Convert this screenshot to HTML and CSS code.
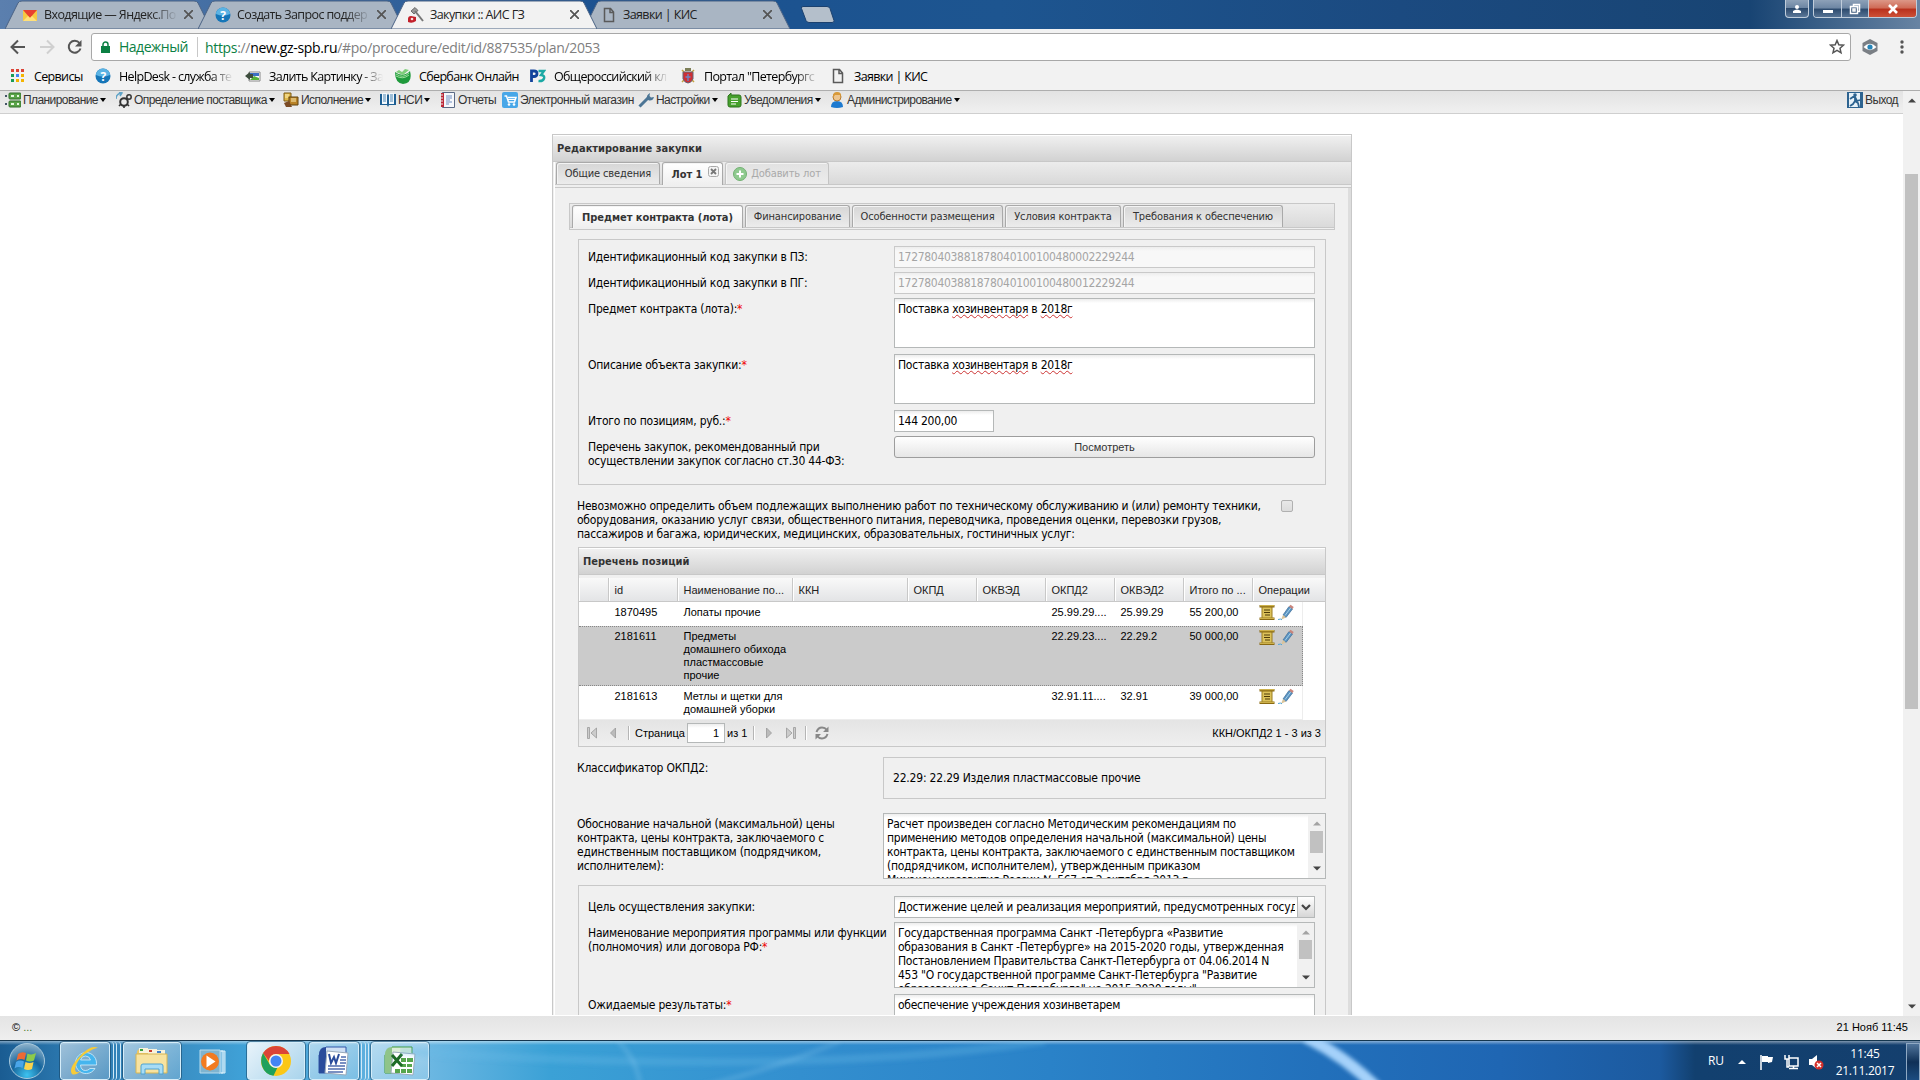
FILE: index.html
```html
<!DOCTYPE html>
<html lang="ru">
<head>
    <meta charset="UTF-8">
    <title>Закупки :: АИС ГЗ</title>
    <link rel="stylesheet" href="styles.css">
</head>
<body>

<!-- icons used more than once -->
<svg class="defs" width="0" height="0">
    <symbol id="i-doc" viewBox="0 0 12 16"><path d="M1.500 1.500h6l3 3.500v9.500h-9z M7 1.500v4h3.500" fill="none" stroke="#5a5a5a" stroke-width="1.500"/></symbol>
    <symbol id="i-help" viewBox="0 0 16 16"><circle cx="8" cy="8" r="7.500" fill="#1676b8"/><path d="M1 7a7 6.500 0 0 1 14 0q-7 3-14 0z" fill="#5bb3e4"/><text x="8" y="12.500" font-size="12" font-weight="bold" text-anchor="middle" fill="#fff">?</text></symbol>
    <symbol id="i-scroll" viewBox="0 0 16 16"><path d="M3 2h10v12H3z" fill="#dcc25a" stroke="#9a7c1e"/><path d="M.500 1.700h15M.500 14.300h15" stroke="#8a6a12" stroke-width="2.600"/><path d="M1 1.200h14M1 13.800h14" stroke="#dcc25a"/><path d="M5 5.500h6M5 8h6M6 10.500h5" stroke="#4d3b08"/></symbol>
    <symbol id="i-pencil" viewBox="0 0 16 16"><path d="M5 10.500L11 2l3.500 2.500-6.500 8.500z" fill="#5b94c2" stroke="#3b6c96" stroke-width=".7"/><path d="M7 11l6-8" stroke="#a5cfe8"/><path d="M11 2l1.500-1.800L15.700 2.500 14.500 4.500z" fill="#c9857c"/><path d="M5 10.500l3 2.500-5 2.200z" fill="#d9c39a"/><path d="M0 15q3-1 4 .3" stroke="#51a5d6" fill="none"/></symbol>
    <symbol id="i-up" viewBox="0 0 8 5"><path d="M0 4.500L4 .5l4 4z" fill="currentColor"/></symbol>
    <symbol id="i-down" viewBox="0 0 8 5"><path d="M0 .5L4 4.500l4-4z" fill="currentColor"/></symbol>
</svg>

<div class="titlebar">
    <div class="tab">
        <svg class="tab-bg" viewBox="0 0 206 29" preserveAspectRatio="none"><path d="M0 29L13 3q1-2 4-2H189q3 0 4 2L206 29z"/></svg>
        <svg class="fav" viewBox="0 0 16 16"><path d="M1 3h14v11H1z" fill="#f5c842"/><path d="M1 3l7 8 7-8z" fill="#e8402f"/><path d="M1 14l5-5 2 2 2-2 5 5z" fill="#ffe07a"/></svg>
        <span class="tab-title t1">Входящие — Яндекс.По</span><span class="tab-x"></span>
    </div>
    <div class="tab">
        <svg class="tab-bg" viewBox="0 0 206 29" preserveAspectRatio="none"><path d="M0 29L13 3q1-2 4-2H189q3 0 4 2L206 29z"/></svg>
        <svg class="fav"><use href="#i-help"/></svg>
        <span class="tab-title t2">Создать Запрос поддер</span><span class="tab-x"></span>
    </div>
    <div class="tab active">
        <svg class="tab-bg" viewBox="0 0 206 29" preserveAspectRatio="none"><path d="M0 29L13 3q1-2 4-2H189q3 0 4 2L206 29z"/></svg>
        <svg class="fav" viewBox="0 0 16 16"><path d="M3 4l4-3.500 3 3L6 7z" fill="#999" stroke="#555" stroke-width=".8"/><path d="M7 4l8 10" stroke="#777" stroke-width="2"/><path d="M0 12q0-3 3-3l5 1v4q-4 3-8 1z" fill="#c3202a"/><circle cx="4" cy="12" r="1.300" fill="#f6dede"/></svg>
        <span class="tab-title t3">Закупки :: АИС ГЗ</span><span class="tab-x"></span>
    </div>
    <div class="tab">
        <svg class="tab-bg" viewBox="0 0 206 29" preserveAspectRatio="none"><path d="M0 29L13 3q1-2 4-2H189q3 0 4 2L206 29z"/></svg>
        <svg class="fav doc"><use href="#i-doc"/></svg>
        <span class="tab-title t4">Заявки | КИС</span><span class="tab-x"></span>
    </div>
    <svg class="new-tab" width="34" height="18"><path d="M2 .5h24q2 0 3 2l4 12q.500 2-2 2H8q-2 0-3-2L.500 2.500q-.500-2 1.500-2z" fill="#b4bfcb" stroke="#1b416f"/></svg>
    <div class="win-buttons">
        <div class="wb user"><svg width="10" height="10"><circle cx="5" cy="3" r="2" fill="#fff"/><path d="M1 9V7q4-3 8 0v2z" fill="#fff"/></svg></div>
        <div class="wb-group">
            <div class="wb min"><svg width="12" height="10"><path d="M1 6h10v3H1z" fill="#fff"/></svg></div>
            <div class="wb max"><svg width="12" height="12"><path d="M4.500 3V1.500h6v7H9M1.500 3.500h7v7h-7z M4 6h2v2H4z" stroke="#fff" fill="none" stroke-width="1.500"/></svg></div>
            <div class="wb close"><svg width="12" height="10"><path d="M2 1l8 8M10 1L2 9" stroke="#fff" stroke-width="2.600"/></svg></div>
        </div>
    </div>
</div>

<div class="toolbar">
    <svg class="nav back" width="16" height="16"><path d="M15 8H2M8 1.500L1.500 8 8 14.500" stroke="#555" stroke-width="2" fill="none"/></svg>
    <svg class="nav fwd" width="16" height="16"><path d="M1 8h13M8 1.500L14.500 8 8 14.500" stroke="#d0d0d0" stroke-width="2" fill="none"/></svg>
    <svg class="nav reload" width="17" height="16"><path d="M13.500 4A6 6 0 1 0 14.500 9.500" stroke="#555" stroke-width="2" fill="none"/><path d="M15.500 1v6.500H9z" fill="#555"/></svg>
    <div class="url">
        <svg class="lock" width="9" height="12"><path d="M0 5h9v7H0z" fill="#0b8043"/><path d="M2 5V3.500a2.500 2.500 0 0 1 5 0V5" stroke="#0b8043" stroke-width="1.500" fill="none"/></svg>
        <span class="secure">Надежный</span>
        <span class="addr"><span class="g">https</span>://<span class="k">new.gz-spb.ru</span>/#po/procedure/edit/id/887535/plan/2053</span>
        <svg class="star" width="16" height="16"><path d="M8 1.500l1.800 4.300 4.700.4-3.500 3.100 1 4.500L8 11.400l-4 2.400 1-4.500L1.500 6.200l4.700-.4z" fill="none" stroke="#555" stroke-width="1.500"/></svg>
    </div>
    <svg class="ext" width="18" height="18"><path d="M9 1l7.500 4v8L9 17l-7.500-4V5z" fill="#7a7f85"/><path d="M2.500 9Q9 2.500 15.500 9 9 15.500 2.500 9z" fill="#fff"/><circle cx="9" cy="9" r="2.600" fill="#2584b8"/></svg>
    <svg class="dots" width="4" height="14"><circle cx="2" cy="2" r="1.700" fill="#555"/><circle cx="2" cy="7" r="1.700" fill="#555"/><circle cx="2" cy="12" r="1.700" fill="#555"/></svg>
</div>

<div class="bookmarks">
    <div class="bm b1"><svg viewBox="0 0 14 14"><path d="M0 0h3v3H0zM5 0h3v3H5zM10 0h3v3h-3z" fill="#dc4437"/><path d="M0 5h3v3H0z" fill="#1a9c57"/><path d="M5 5h3v3H5z" fill="#4285f4"/><path d="M10 5h3v3h-3zM5 10h3v3H5zM10 10h3v3h-3z" fill="#f4b400"/><path d="M0 10h3v3H0z" fill="#1a9c57"/></svg><span>Сервисы</span></div>
    <div class="bm b2"><svg><use href="#i-help"/></svg><span class="fade">HelpDesk - служба те</span></div>
    <div class="bm b3"><svg viewBox="0 0 16 16"><path d="M4 4h11v9H4z" fill="#fff" stroke="#888"/><path d="M5 5h9v3H5z" fill="#3c6fc4"/><path d="M5 12l4-4 5 2v2z" fill="#56b33c"/><path d="M0 8l5-4v2h3v4H5v2z" fill="#3d4d3d"/></svg><span class="fade">Залить Картинку - За</span></div>
    <div class="bm b4"><svg viewBox="0 0 16 16"><path d="M0 4q8 6 15-1 3 12-7 13Q0 15 0 4z" fill="#1f9a3c"/><path d="M1 4l3-2 3 2 3-3 4 1-6 5z" fill="#7fce7a"/><path d="M1 6q7 5 13-1M1 8q7 4 13-1" stroke="#baf0b0" fill="none" stroke-width=".8"/></svg><span>Сбербанк Онлайн</span></div>
    <div class="bm b5"><svg viewBox="0 0 16 16"><path d="M1.500 14V3h2.500q3 0 3 2.700T4 8.500H2" stroke="#12439c" stroke-width="2.800" fill="none"/><path d="M8.500 3H14l-3 4q4 .5 3 3.500t-5.500 2.500" stroke="#1ba9a5" stroke-width="2.400" fill="none"/></svg><span class="fade">Общероссийский кл</span></div>
    <div class="bm b6"><svg viewBox="0 0 16 16"><path d="M2 2l12 12M14 2L2 14" stroke="#c4a33f" stroke-width="1.500"/><path d="M3 4h10v7q-2 4-5 4t-5-4z" fill="#cf2f34" stroke="#667" /><path d="M5 0h6v3H5z" fill="#7d7f58"/><path d="M8 6v7M5.500 9h5" stroke="#6a87c5" stroke-width="1.300"/></svg><span class="fade">Портал "Петербургс</span></div>
    <div class="bm b7"><svg><use href="#i-doc"/></svg><span>Заявки | КИС</span></div>
</div>

<div class="viewport">
    <div class="page">
        <div class="menubar">
            <div class="mi m1"><svg viewBox="0 0 16 16"><path d="M0 3h2v2H0zM0 11h2v2H0z" fill="#456"/><rect x="4" y="1" width="12" height="6" rx="1" fill="#58a347" stroke="#33702a"/><rect x="4" y="9" width="12" height="6" rx="1" fill="#58a347" stroke="#33702a"/><path d="M6 4h3M6 12h3M12 4h2M12 12h2" stroke="#e6f7df" stroke-width="2"/></svg><span>Планирование</span><i></i></div>
            <div class="mi m2"><svg viewBox="0 0 16 16"><circle cx="8" cy="10" r="3.800" fill="none" stroke="#333" stroke-width="2"/><circle cx="13" cy="5" r="2.200" fill="none" stroke="#333" stroke-width="1.500"/><path d="M0 7q0-5 5-6M3 0l3 1-2 3" stroke="#5fa3c7" fill="none" stroke-width="1.500"/><path d="M3 14l2-2M13 14l-2-2M8 16v-2" stroke="#333" stroke-width="1.600"/></svg><span>Определение поставщика</span><i></i></div>
            <div class="mi m3"><svg viewBox="0 0 16 16"><path d="M1 1h7v8H1z" fill="#e0b84a" stroke="#7d5a12"/><path d="M6 5h9v8H6z" fill="#b98226" stroke="#5f4210"/><path d="M2 3h4M2 5h3M8 7h5M8 9h5" stroke="#fff0b8"/><path d="M1 11l5-2 3 6H3z" fill="#7a4a24"/></svg><span>Исполнение</span><i></i></div>
            <div class="mi m4"><svg viewBox="0 0 16 16"><path d="M0 2h7l1 1 1-1h7v11H9l-1 2-1-2H0z" fill="#1e5f93"/><path d="M2 1h5v11H2zM9 1h5v11H9z" fill="#f3f8fc"/><path d="M3 3h3M3 5h3M3 7h3M3 9h3M10 3h3M10 5h3M10 7h3M10 9h3" stroke="#4c86b3"/></svg><span>НСИ</span><i></i></div>
            <div class="mi m5"><svg viewBox="0 0 16 16"><path d="M2.500.5h12v15h-12z" fill="#f6f8fc" stroke="#5a6a86"/><path d="M1 1h3v14H1z" fill="#bb2838"/><path d="M0 3h3M0 6h3M0 9h3M0 12h3" stroke="#eee"/><path d="M6 4h6M6 6h6M6 8h4M6 10h6M6 12h3" stroke="#6f8dc0"/></svg><span>Отчеты</span></div>
            <div class="mi m6"><svg viewBox="0 0 16 16"><rect width="16" height="16" rx="2" fill="#48a7e8"/><path d="M2.500 4h2l2 6h6l1.500-4.500h-8" fill="none" stroke="#fff" stroke-width="1.500"/><path d="M6 7.500h7" stroke="#fff"/><circle cx="7" cy="12.500" r="1.300" fill="#fff"/><circle cx="12" cy="12.500" r="1.300" fill="#fff"/></svg><span>Электронный магазин</span></div>
            <div class="mi m7"><svg viewBox="0 0 16 16"><path d="M1.500 14.500L10 6" stroke="#4c7595" stroke-width="3"/><path d="M9 7q-1-4 3-6l-.5 3 1.500 1.500 3-.5q-1 4-5 3.500z" fill="#4c7595"/></svg><span>Настройки</span><i></i></div>
            <div class="mi m8"><svg viewBox="0 0 16 16"><path d="M2 4l3-3v2h8q2 0 2 2v8q0 2-2 2H4q-2 0-2-2z" fill="#46a02c" stroke="#2d741c"/><path d="M5 7h7M5 9.500h7M5 12h5" stroke="#fff"/></svg><span>Уведомления</span><i></i></div>
            <div class="mi m9"><svg viewBox="0 0 16 16"><path d="M2 15q0-6 6-6t6 6q-6 2-12 0z" fill="#1d7ad0"/><circle cx="8" cy="5" r="4" fill="#edc58f" stroke="#b5792e"/><path d="M4 6V4q0-4 4-4 5 0 4 5l-1-2H6z" fill="#d89a3a"/></svg><span>Администрирование</span><i></i></div>
            <div class="mi exit"><svg viewBox="0 0 16 16"><path d="M0 0h16v16H0z" fill="#2d6390"/><path d="M2 1h11v14H2z" fill="#e7f1f8"/><circle cx="8" cy="3" r="1.800" fill="#2d6390"/><path d="M3 7l3-2h2l2 4 3-1M8 5v4l-2 3-3 2M8 9l3 2 1 4" stroke="#2d6390" stroke-width="1.800" fill="none"/></svg><span>Выход</span></div>
        </div>

        <div class="window">
            <div class="window-title">Редактирование закупки</div>
            <div class="lot-tabs">
                <div class="xt lt1"><span>Общие сведения</span></div>
                <div class="xt on lt2"><span>Лот 1</span><svg class="xt-close" width="11" height="11"><rect x=".5" y=".5" width="10" height="10" rx="2" fill="#f4f4f4" stroke="#aaa"/><path d="M3 3l5 5M8 3L3 8" stroke="#777" stroke-width="1.800"/></svg></div>
                <div class="xt off lt3"><svg width="14" height="14"><circle cx="7" cy="7" r="6.500" fill="#8fca8f" stroke="#72b072"/><path d="M7 3.500v7M3.500 7h7" stroke="#fff" stroke-width="2"/></svg><span>Добавить лот</span></div>
            </div>
            <div class="window-body">
                <div class="sub-tabs">
                    <div class="xt on st1"><span>Предмет контракта (лота)</span></div>
                    <div class="xt st2"><span>Финансирование</span></div>
                    <div class="xt st3"><span>Особенности размещения</span></div>
                    <div class="xt st4"><span>Условия контракта</span></div>
                    <div class="xt st5"><span>Требования к обеспечению</span></div>
                </div>

                <div class="fieldset fs1">
                    <div class="row h26"><label>Идентификационный код закупки в ПЗ:</label><div class="input disabled">172780403881878040100100480002229244</div></div>
                    <div class="row h26"><label>Идентификационный код закупки в ПГ:</label><div class="input disabled">172780403881878040100100480012229244</div></div>
                    <div class="row h56"><label>Предмет контракта (лота):<b>*</b></label><div class="input area">Поставка <u>хозинвентаря</u> в <u>2018г</u></div></div>
                    <div class="row h56"><label>Описание объекта закупки:<b>*</b></label><div class="input area">Поставка <u>хозинвентаря</u> в <u>2018г</u></div></div>
                    <div class="row h26"><label>Итого по позициям, руб.:<b>*</b></label><div class="input sum">144 200,00</div></div>
                    <div class="row"><label>Перечень закупок, рекомендованный при<br>осуществлении закупок согласно ст.30 44-ФЗ:</label><div class="btn">Посмотреть</div></div>
                </div>

                <div class="impossible">
                    <p>Невозможно определить объем подлежащих выполнению работ по техническому обслуживанию и (или) ремонту техники,<br>оборудования, оказанию услуг связи, общественного питания, переводчика, проведения оценки, перевозки грузов,<br>пассажиров и багажа, юридических, медицинских, образовательных, гостиничных услуг:</p>
                    <div class="check"></div>
                </div>

                <div class="grid-panel">
                    <div class="grid-title">Перечень позиций</div>
                    <div class="grid-row grid-head">
                        <div></div><div>id</div><div>Наименование по...</div><div>ККН</div><div>ОКПД</div><div>ОКВЭД</div><div>ОКПД2</div><div>ОКВЭД2</div><div>Итого по ...</div><div>Операции</div>
                    </div>
                    <div class="grid-body">
                        <div class="grid-row r1">
                            <div></div><div>1870495</div><div>Лопаты прочие</div><div></div><div></div><div></div><div>25.99.29....</div><div>25.99.29</div><div>55 200,00</div><div class="ops"><svg><use href="#i-scroll"/></svg><svg><use href="#i-pencil"/></svg></div>
                        </div>
                        <div class="grid-row r2 selected">
                            <div></div><div>2181611</div><div>Предметы<br>домашнего обихода<br>пластмассовые<br>прочие</div><div></div><div></div><div></div><div>22.29.23....</div><div>22.29.2</div><div>50 000,00</div><div class="ops"><svg><use href="#i-scroll"/></svg><svg><use href="#i-pencil"/></svg></div>
                        </div>
                        <div class="grid-row r3">
                            <div></div><div>2181613</div><div>Метлы и щетки для<br>домашней уборки</div><div></div><div></div><div></div><div>32.91.11....</div><div>32.91</div><div>39 000,00</div><div class="ops"><svg><use href="#i-scroll"/></svg><svg><use href="#i-pencil"/></svg></div>
                        </div>
                    </div>
                    <div class="pager">
                        <svg class="pg first" width="10" height="12"><path d="M.5 0.500h2v11h-2zM9.500 1v10L4 6z" fill="#ccc" stroke="#999" stroke-width=".8"/></svg>
                        <svg class="pg prev" width="6" height="12"><path d="M5.500 1v10L.5 6z" fill="#bbb" stroke="#999" stroke-width=".8"/></svg>
                        <span class="sep s1"></span>
                        <span class="pg-label">Страница</span>
                        <span class="pg-input">1</span>
                        <span class="pg-of">из 1</span>
                        <span class="sep s2"></span>
                        <svg class="pg next" width="6" height="12"><path d="M.5 1v10l5-5z" fill="#bbb" stroke="#999" stroke-width=".8"/></svg>
                        <svg class="pg last" width="10" height="12"><path d="M7.500.5h2v11h-2zM.5 1v10L6 6z" fill="#ccc" stroke="#999" stroke-width=".8"/></svg>
                        <span class="sep s3"></span>
                        <svg class="pg" width="14" height="14"><path d="M1.500 6Q3 1.500 7 1.500q3 0 5 2.500M12.500 8q-1.500 4.500-5.500 4.500-3 0-5-2.500" stroke="#888" stroke-width="2" fill="none"/><path d="M13.500.5V6H8zM.5 13.500V8H6z" fill="#888"/></svg>
                        <span class="pg-total">ККН/ОКПД2 1 - 3 из 3</span>
                    </div>
                </div>

                <div class="outer-row classifier"><label>Классификатор ОКПД2:</label><div class="class-box">22.29: 22.29 Изделия пластмассовые прочие</div></div>

                <div class="outer-row reason">
                    <label>Обоснование начальной (максимальной) цены<br>контракта, цены контракта, заключаемого с<br>единственным поставщиком (подрядчиком,<br>исполнителем):</label>
                    <div class="input scrolled">
                        <p>Расчет произведен согласно Методическим рекомендациям по<br>применению методов определения начальной (максимальной) цены<br>контракта, цены контракта, заключаемого с единственным поставщиком<br>(подрядчиком, исполнителем), утвержденным приказом<br>Минэкономразвития России № 567 от 2 октября 2013 г.</p>
                        <div class="vbar"><svg class="dim"><use href="#i-up"/></svg><div class="thumb big"></div><svg><use href="#i-down"/></svg></div>
                    </div>
                </div>

                <div class="fieldset fs2">
                    <div class="row h26"><label>Цель осуществления закупки:</label><div class="input select"><span>Достижение целей и реализация мероприятий, предусмотренных государственной</span><div class="trigger"><svg width="10" height="7"><path d="M1 1l4 4 4-4" stroke="#444" stroke-width="2.200" fill="none"/></svg></div></div></div>
                    <div class="row h72"><label>Наименование мероприятия программы или функции<br>(полномочия) или договора РФ:<b>*</b></label>
                        <div class="input scrolled">
                            <p>Государственная программа Санкт -Петербурга «Развитие<br>образования в Санкт -Петербурге» на 2015-2020 годы, утвержденная<br>Постановлением Правительства Санкт-Петербурга от 04.06.2014 N<br>453 "О государственной программе Санкт-Петербурга "Развитие<br>образования в Санкт-Петербурге" на 2015-2020 годы"</p>
                            <div class="vbar"><svg class="dim"><use href="#i-up"/></svg><div class="thumb"></div><svg><use href="#i-down"/></svg></div>
                        </div>
                    </div>
                    <div class="row"><label>Ожидаемые результаты:<b>*</b></label><div class="input area">обеспечение учреждения хозинветарем</div></div>
                </div>
            </div>
        </div>
    </div>
    <div class="scrollbar"><svg><use href="#i-up"/></svg><div class="thumb"></div><svg><use href="#i-down"/></svg></div>
</div>

<div class="footer"><span class="copy">© <em>...</em></span><span class="date">21 Нояб 11:45</span></div>

<div class="taskbar">
    <svg class="streak" width="1300" height="39" viewBox="0 0 1300 39"><defs><filter id="soft" filterUnits="userSpaceOnUse" x="0" y="-20" width="1300" height="80"><feGaussianBlur stdDeviation="2"/></filter></defs><g filter="url(#soft)" fill="none"><path d="M0 10Q400 36 645 0" stroke="#6bbbe8" stroke-width="8" opacity=".3"/><path d="M218 0Q236 18 240 42M440 0Q380 26 300 46" stroke="#8ccbf0" stroke-width="5" opacity=".25"/><path d="M906-4Q946 16 978 48" stroke="#a5d2fa" stroke-width="12"/></g></svg>
    <svg class="orb" width="38" height="38"><defs><radialGradient id="orb" cx=".5" cy=".9" r=".9"><stop offset="0" stop-color="#3cc3f0"/><stop offset=".5" stop-color="#17659c"/><stop offset="1" stop-color="#8fb3cc"/></radialGradient></defs><circle cx="19" cy="19" r="17.500" fill="url(#orb)" stroke="#a7c9dd"/><path d="M10 12q4-3 8-1l-1.500 7q-4-2-8 .5z" fill="#ec6a35"/><path d="M19.500 11.500q4 2 8.500-.5l-2 7.500q-4 2-8 0z" fill="#8ccb4c"/><path d="M8 20q4-2.500 8-.5L14.500 26q-4-2-8 .5z" fill="#4aa5e8"/><path d="M17.500 20q4 2 8 0L24 27q-4 2-8 0z" fill="#fbd34c"/></svg>
    <div class="task ie"><svg width="32" height="32"><path d="M27.500 18.500a10.500 10.500 0 1 0-1.500 5h-5q-2 2-4.500 2-4.500 0-5-5.500h16zM11.500 15q1-4 5-4t5 4z" fill="#45b5ee" stroke="#d5effb" stroke-width=".8" fill-rule="evenodd"/><path d="M29 3q-7-4-19 9Q-1 24 3 29q3 2 9-3-6 3-6-2 1-8 10-15Q26 2 29 3z" fill="#f7cb37"/></svg></div>
    <span class="stack"></span><span class="stack"></span><span class="stack"></span>
    <div class="task explorer"><svg width="34" height="30"><path d="M2 5l3-3h7l2 3h16v20H2z" fill="#eac766"/><path d="M4 2h9v5H4zM13 3h9v5h-9zM21 4h9v5h-9z" fill="#f8f3dc"/><path d="M5 3h3v2H5z" fill="#38a03a"/><path d="M14 4h3v2h-3z" fill="#cb3d2d"/><path d="M22 5h4v2h-4z" fill="#3f7fcc"/><path d="M1 8h31v19H1z" fill="#f7e3a0" stroke="#d5b555"/><path d="M6 28v-8q0-2 2-2h18q2 0 2 2v8h-4v-5H10v5z" fill="#a7dcf5" stroke="#4fa3d2"/></svg></div>
    <svg class="wmp" width="28" height="26"><path d="M22 2h4v22h-4M20 2h4v22h-4" fill="#88c4e6" stroke="#d8effa"/><path d="M1 1h20v23H1z" fill="#7fb4d0" stroke="#b9dcee"/><circle cx="11" cy="12.500" r="9" fill="#f27b21"/><path d="M7.500 6.500v12l9-6z" fill="#fff"/></svg>
    <div class="task chrome"><svg width="30" height="30" viewBox="0 0 30 30"><circle cx="15" cy="15" r="15" fill="#fbc716"/><path d="M15 0Q24 0 28.500 8H15q-6 0-7 7L2 7Q7 0 15 0z" fill="#db4437"/><path d="M2 7l6.500 11q2.500 4 8 3.500L12.500 29.800Q4 28.500 1 20-1 13 2 7z" fill="#1fa15d"/><circle cx="15" cy="15" r="7" fill="#f3f3f3"/><circle cx="15" cy="15" r="5.500" fill="#4285f4"/></svg></div>
    <div class="task word"><svg width="32" height="31"><path d="M8 1h20v26H1V9z" fill="#cfe0f4" stroke="#3157a8"/><path d="M8 1v26H1V9q0-8 7-8z" fill="#2a4c9b"/><path d="M9 5l21 2-2 22-21-2z" fill="#fff" stroke="#9ab"/><path d="M11 8l2 9 3-6 2 6 3-9" stroke="#2a4c9b" stroke-width="2" fill="none"/><path d="M10 20h17M10 23h17M10 26h15M22 14h6M22 17h6M23 11h5" stroke="#4f6cae" stroke-width="1.300"/></svg></div>
    <span class="stack"></span><span class="stack"></span><span class="stack"></span>
    <div class="task excel"><svg width="32" height="31"><path d="M8 1h20v26H1V9z" fill="#dceed7" stroke="#3f9a36"/><path d="M8 1v26H1V9q0-8 7-8z" fill="#8fc489"/><path d="M9 6l22 2-2 21-22-2z" fill="#fff" stroke="#9ab"/><path d="M17 12h5v4h-5zM23 12h6v4h-6zM17 18h5v3h-5zM23 18h5v3h-5zM11 23h5v4h-5zM17 23h5v4h-5zM23 23h5v4h-5z" fill="#56a54b"/><path d="M8 9l10 11M18 8L8 20" stroke="#1e6b26" stroke-width="3"/></svg></div>
    <div class="tray">
        <span class="lang">RU</span>
        <svg class="tray-up" width="8" height="5"><path d="M0 5l4-4 4 4z" fill="#fff"/></svg>
        <svg class="flag" width="16" height="16"><path d="M2 1v15" stroke="#fff" stroke-width="1.500"/><path d="M3 2h6v1h5l-1 5-4 1V8H3z" fill="#fff"/></svg>
        <svg class="net" width="16" height="16"><path d="M5 4h9v8H5zM5 14.500h9M9.500 12v3M1 1v4h4V1M3 5v8h2" stroke="#fff" stroke-width="1.500" fill="none"/></svg>
        <svg class="vol" width="16" height="16"><path d="M1 5h3l5-4v14l-5-4H1z" fill="#fff"/><circle cx="11" cy="11" r="4.500" fill="#d32f2a"/><path d="M9 9l4 4M13 9l-4 4" stroke="#fff" stroke-width="1.500"/></svg>
        <div class="clock">11:45<br>21.11.2017</div>
        <div class="show-desktop"></div>
    </div>
</div>

</body>
</html>
```
FILE: styles.css
```css
* {
    box-sizing: border-box;
}
body {
    margin: 0;
    width: 1920px;
    height: 1080px;
    overflow: hidden;
    display: flex;
    flex-direction: column;
    background: #fff;
    font-family: "DejaVu Sans Condensed", "DejaVu Sans", sans-serif;
    font-stretch: condensed;
    font-size: 12px;
    white-space: nowrap;
    color: #000;
}
svg {
    flex: none;
    display: block;
}
p {
    margin: 0;
}
.defs {
    position: absolute;
}

/* browser tabs */
.titlebar {
    flex: none;
    height: 29px;
    display: flex;
    padding-left: 5px;
    background: linear-gradient(90deg, #5b7fae 0, #1b5190 600px, #1d5590 1000px, #1b4a80 1400px, #184473 1750px, #6884a3 1920px);
}
.tab {
    position: relative;
    z-index: 0;
    width: 206px;
    height: 29px;
    margin-right: -13px;
    display: flex;
    align-items: center;
    padding-left: 17px;
    font: 12.5px "Open Sans", sans-serif;
    color: #222;
}
.tab.active {
    z-index: 1;
}
.tab-bg {
    position: absolute;
    left: 0;
    top: 0;
    width: 206px;
    height: 29px;
    z-index: -1;
    fill: #a9b5c3;
    stroke: #4b6384;
}
.tab.active .tab-bg {
    fill: #f2f2f2;
}
.fav {
    width: 16px;
    height: 16px;
    margin-right: 6px;
}
.tab-title {
    width: 134px;
    overflow: hidden;
    letter-spacing: -0.6px;
}
.t1, .t2 {
    -webkit-mask: linear-gradient(90deg, #000 80%, transparent);
}
.tab-x {
    width: 20px;
    height: 20px;
    background:
        linear-gradient(45deg, transparent 43%, #555 45%, #555 55%, transparent 57%) center / 9px 9px no-repeat,
        linear-gradient(-45deg, transparent 43%, #555 45%, #555 55%, transparent 57%) center / 9px 9px no-repeat;
}
.new-tab {
    margin: 6px 0 0 24px;
}
.win-buttons {
    margin-left: auto;
    margin-right: 3px;
    display: flex;
    gap: 4px;
}
.wb {
    height: 18px;
    display: flex;
    align-items: center;
    justify-content: center;
    background: linear-gradient(#8da1b8, #6d86a3 45%, #2c4a6d 50%, #5b7899);
}
.wb.user {
    width: 24px;
    border: 1px solid #c0cddb;
    border-top: 0;
    border-radius: 0 0 4px 4px;
}
.wb-group {
    display: flex;
    height: 18px;
    border: 1px solid #c0cddb;
    border-top: 0;
    border-radius: 0 0 4px 4px;
    overflow: hidden;
}
.min {
    width: 28px;
    border-right: 1px solid #c0cddb;
}
.max {
    width: 27px;
    border-right: 1px solid #c0cddb;
}
.close {
    width: 47px;
    background: linear-gradient(#dc9787, #cf6a55 45%, #b8301c 50%, #d0553a);
}

/* address row */
.toolbar {
    flex: none;
    height: 33px;
    display: flex;
    align-items: center;
    padding: 3px 0 0 10px;
    background: #f2f2f2;
}
.fwd {
    margin-left: 13px;
}
.reload {
    margin-left: 11px;
}
.url {
    width: 1760px;
    height: 28px;
    margin-left: 8px;
    padding: 0 5px 0 9px;
    display: flex;
    align-items: center;
    background: #fff;
    border: 1px solid #a8a8a8;
    border-radius: 3px;
    font: 14px "Open Sans", sans-serif;
    color: #808080;
}
.secure {
    margin-left: 9px;
    width: 79px;
    color: #0b8043;
    border-right: 1px solid #c8c8c8;
    line-height: 20px;
    letter-spacing: -0.5px;
}
.addr {
    margin-left: 7px;
    letter-spacing: -0.33px;
}
.g {
    color: #0b8043;
}
.k {
    color: #000;
}
.star {
    margin-left: auto;
}
.ext {
    margin-left: 10px;
}
.dots {
    margin-left: 21px;
}

/* bookmarks */
.bookmarks {
    flex: none;
    height: 29px;
    display: flex;
    align-items: center;
    padding-left: 11px;
    background: #f2f2f2;
    border-bottom: 1px solid #aeaeae;
    font: 12.5px "Open Sans", sans-serif;
}
.bm {
    display: flex;
    align-items: center;
    gap: 8px;
    letter-spacing: -0.65px;
}
.bm svg {
    width: 16px;
    height: 16px;
}
.b1 { width: 84px; }
.b2 { width: 150px; }
.b3 { width: 150px; }
.b4 { width: 135px; }
.b5 { width: 150px; }
.b6 { width: 150px; }
.b1 {
    gap: 9px;
}
.b1 svg {
    width: 14px;
    height: 14px;
}
.fade {
    width: 114px;
    overflow: hidden;
    -webkit-mask: linear-gradient(90deg, #000 80%, transparent);
}

/* page area */
.viewport {
    flex: none;
    height: 925px;
    display: flex;
    overflow: hidden;
}
.page {
    width: 1903px;
    overflow: hidden;
    border-bottom: 1px solid #fff;
}
.scrollbar {
    width: 17px;
    padding: 7px 0;
    display: flex;
    flex-direction: column;
    align-items: center;
    background: #f1f1f1;
    color: #444;
}
.scrollbar svg {
    width: 8px;
    height: 5px;
}
.scrollbar .thumb {
    width: 13px;
    height: 535px;
    margin: 71px 0 auto;
    background: #c1c1c1;
}
.menubar {
    height: 23px;
    display: flex;
    padding: 0 0 0 5px;
    background: linear-gradient(#e3e3e3, #f0f0f0);
    border-bottom: 1px solid #cfcfcf;
    font: 12px "Liberation Sans", sans-serif;
    color: #333;
    letter-spacing: -0.58px;
}
.mi {
    display: flex;
    align-items: center;
    height: 18px;
}
.mi svg {
    width: 16px;
    height: 16px;
    margin-right: 2px;
}
.mi i {
    margin-left: 2px;
    border: 3px solid transparent;
    border-top: 4px solid #000;
    border-bottom: 0;
}
.m1 { width: 111px; }
.m2 { width: 167px; }
.m3 { width: 97px; }
.m4 { width: 60px; }
.m5 { width: 62px; }
.m6 { width: 136px; letter-spacing: -0.45px; }
.m7 { width: 88px; }
.m8 { width: 103px; }
.exit {
    margin-left: auto;
    margin-right: 5px;
}

/* edit window */
.window {
    width: 800px;
    height: 1000px;
    margin: 20px 0 0 552px;
    background: #f0f0f0;
    border: 1px solid #c8c8c8;
}
.window-title, .grid-title {
    padding-left: 4px;
    height: 27px;
    line-height: 26px;
    font-size: 11px;
    font-weight: bold;
    color: #333;
    background: linear-gradient(#f0f0f0, #d2d2d2);
    border-top: 1px solid #fff;
    border-bottom: 1px solid #c8c8c8;
}
.lot-tabs {
    height: 26px;
    margin-left: 1px;
    padding: 0 0 0 1px;
    display: flex;
    background: linear-gradient(#ececec, #d9d9d9 22px, #c8c8c8 22px, #c8c8c8 23px, #efefef 23px, #efefef 25px, #c8c8c8 25px);
    border-left: 1px solid #fff;
}
.xt {
    height: 22px;
    margin-right: 2px;
    display: flex;
    align-items: center;
    justify-content: center;
    font-size: 11px;
    letter-spacing: -0.12px;
    color: #333;
    background: linear-gradient(#d6d6d6, #ececec);
    border: 1px solid #a9a9a9;
    border-bottom: 0;
    border-radius: 3px 3px 0 0;
    box-shadow: inset 1px 1px 0 #f4f4f4;
}
.xt.on {
    height: 23px;
    font-weight: bold;
    letter-spacing: -0.05px;
    background: linear-gradient(#fff, #efefef);
}
.xt.off {
    color: #aaa;
    border-color: #c4c4c4;
    background: linear-gradient(#e2e2e2, #ececec);
}
.xt.off svg {
    margin-right: 4px;
}
.xt-close {
    margin: -5px -6px 0 6px;
}
.lt1 { width: 104px; }
.lt2 { width: 61px; }
.lt3 { width: 104px; }
.window-body {
    height: 830px;
    margin-left: 1px;
    padding: 15px 0 0 14px;
    border-left: 1px solid #fff;
    border-right: 3px solid #ddd;
}
.sub-tabs {
    width: 766px;
    height: 27px;
    padding: 1px 0 0 2px;
    display: flex;
    background: linear-gradient(#ececec, #dadada 23px, #c8c8c8 23px, #c8c8c8 24px, #efefef 24px);
    border: 1px solid #c8c8c8;
}
.st1 { width: 171px; }
.st2 { width: 105px; }
.st3 { width: 151px; }
.st4 { width: 116px; }
.st5 { width: 160px; }

/* form fields */
.fieldset {
    width: 748px;
    margin-left: 9px;
    padding-left: 9px;
    border: 1px solid #c8c8c8;
}
.fs1 {
    height: 246px;
    margin-top: 9px;
    padding-top: 6px;
}
.row {
    display: flex;
    align-items: flex-start;
}
.h26 { height: 26px; }
.h56 { height: 56px; }
.h72 { height: 72px; }
label {
    flex: none;
    width: 306px;
    padding-top: 4px;
    line-height: 14px;
    letter-spacing: -0.23px;
}
label b {
    color: #e00;
    font-weight: normal;
}
.input {
    width: 421px;
    height: 22px;
    padding-left: 3px;
    line-height: 21px;
    letter-spacing: -0.26px;
    background: linear-gradient(#ededed, #fff 4px);
    border: 1px solid #b5b8b8;
    overflow: hidden;
}
.input.disabled {
    color: #a5a5a5;
    letter-spacing: -0.3px;
    background: linear-gradient(#ededed, #f8f8f8 4px);
    border-color: #c9c9c9;
}
.input.area {
    height: 50px;
    line-height: 20px;
}
.input.sum {
    width: 100px;
}
.input u {
    text-decoration: underline wavy #c33 1px;
    text-underline-offset: 1px;
    text-decoration-skip-ink: none;
}
.btn {
    width: 421px;
    height: 22px;
    line-height: 20px;
    text-align: center;
    font-family: "Liberation Sans", sans-serif;
    font-size: 11px;
    color: #333;
    background: linear-gradient(#fff, #e6e6e6);
    border: 1px solid #9d9d9d;
    border-radius: 3px;
}
.impossible {
    display: flex;
    justify-content: space-between;
    width: 716px;
    height: 62px;
    margin-left: 8px;
    padding-top: 14px;
    line-height: 14px;
    letter-spacing: -0.24px;
}
.check {
    flex: none;
    width: 12px;
    height: 12px;
    margin-top: 1px;
    border: 1px solid #b0b0b0;
    border-radius: 2px;
    background: linear-gradient(#e8e8e8, #dcdcdc);
}

/* positions grid */
.grid-panel {
    width: 748px;
    height: 200px;
    margin-left: 9px;
    border: 1px solid #c8c8c8;
    font: 11px "Liberation Sans", sans-serif;
}
.grid-title {
    font-family: "DejaVu Sans Condensed", "DejaVu Sans", sans-serif;
}
.grid-row {
    display: grid;
    grid-template-columns: 30px 69px 115px 115px 69px 69px 69px 69px 69px 1fr;
    line-height: 13px;
}
.grid-row > div {
    padding: 4px 0 0 5.5px;
}
.grid-head {
    height: 24px;
    margin-top: 3px;
    background: linear-gradient(#f9f9f9, #e3e4e6);
    border-bottom: 1px solid #c8c8c8;
}
.grid-head > div {
    padding-top: 6px;
    color: #222;
    border-right: 1px solid #c8c8c8;
    box-shadow: inset 1px 0 0 #fff;
}
.grid-head > div:last-child {
    border-right: 0;
}
.grid-body {
    height: 118px;
    background: #fff;
}
.grid-body .grid-row {
    width: 724px;
    border-right: 1px solid #ededed;
}
.r1 { height: 24px; }
.r2 { height: 60px; }
.r3 {
    height: 34px;
    border-bottom: 1px solid #ededed;
}
.grid-body .selected {
    background: #cbcbcb;
    border: 1px dotted #888;
    border-left: 0;
}
.selected > div {
    padding-top: 3px;
}
.ops {
    display: flex;
    gap: 3px;
}
.grid-row .ops {
    padding-top: 2px;
}
.ops svg {
    width: 16px;
    height: 17px;
}
.pager {
    display: flex;
    align-items: center;
    height: 26px;
    padding: 0 5px 0 8px;
    background: linear-gradient(#e4e4e4, #efefef);
}
.prev { margin-left: 13px; }
.next { margin-left: 11px; }
.last { margin-left: 14px; }
.sep {
    width: 2px;
    height: 14px;
    background: #b5b5b5;
    border-right: 1px solid #fff;
}
.s1 { margin: 0 5px 0 12px; }
.s2 { margin-left: 7px; }
.s3 { margin: 0 8px 0 9px; }
.pg-label {
    width: 52px;
}
.pg-input {
    width: 38px;
    height: 20px;
    line-height: 19px;
    padding-right: 5px;
    text-align: right;
    background: linear-gradient(#ededed, #fff 4px);
    border: 1px solid #b5b8b8;
}
.pg-of {
    margin-left: 2px;
    width: 19px;
}
.pg-total {
    margin-left: auto;
    margin-right: -1px;
}

/* fields below the grid */
.outer-row {
    display: flex;
    align-items: flex-start;
    margin-left: 8px;
}
.classifier {
    height: 56px;
    margin-top: 10px;
}
.class-box {
    width: 443px;
    height: 42px;
    padding-left: 9px;
    line-height: 40px;
    letter-spacing: -0.2px;
    border: 1px solid #c8c8c8;
}
.reason {
    height: 72px;
}
.scrolled {
    display: flex;
    justify-content: space-between;
    height: 66px;
    line-height: 14px;
}
.scrolled p {
    padding-top: 3px;
}
.reason .scrolled {
    width: 443px;
}
.fs2 {
    height: 200px;
    padding-top: 10px;
}
.vbar {
    flex: none;
    width: 17px;
    height: 64px;
    padding: 7px 0;
    display: flex;
    flex-direction: column;
    align-items: center;
    background: #f1f1f1;
    color: #444;
}
.vbar svg {
    width: 8px;
    height: 5px;
}
.vbar .dim {
    color: #a3a3a3;
}
.vbar .thumb {
    width: 13px;
    height: 19px;
    margin: 5px 0 auto;
    background: #c1c1c1;
}
.vbar .big {
    height: 22px;
}
.select {
    display: flex;
    justify-content: space-between;
}
.select span {
    width: 397px;
    overflow: hidden;
}
.trigger {
    width: 17px;
    height: 20px;
    display: flex;
    align-items: center;
    justify-content: center;
    background: linear-gradient(#fff, #d6d6d6);
    border-left: 1px solid #b5b8b8;
}

/* page footer */
.footer {
    flex: none;
    height: 24px;
    display: flex;
    justify-content: space-between;
    padding: 0 12px 0 12px;
    line-height: 23px;
    background: linear-gradient(#e4e4e4, #efefef);
    font-family: "Liberation Sans", sans-serif;
    font-size: 11px;
}
.footer em {
    font-style: normal;
    color: #4a7a2c;
}

/* windows taskbar */
.taskbar {
    position: relative;
    flex: none;
    height: 41px;
    display: flex;
    padding-top: 1px;
    border-top: 1px solid #14364f;
    background: linear-gradient(rgba(255, 255, 255, .45), rgba(255, 255, 255, 0) 4px),
        linear-gradient(90deg, #1a5c92 0, #2a76ad 60px, #3a8fc4 180px, #3fa0d6 240px, #6bb7e2 430px, #3ba1d6 550px, #338fcf 800px, #2a82c8 1050px, #2270bb 1320px, #1f66b3 1500px, #1c5a9f 1660px, #12406f 1695px, #143f6e 1920px);
}
.streak {
    position: absolute;
    left: 400px;
    top: 0;
}
.orb {
    margin-left: 8px;
}
.task {
    height: 38px;
    display: flex;
    align-items: center;
    justify-content: center;
    border: 1px solid #d5edf9;
    border-radius: 3px;
    outline: 1px solid rgba(20, 60, 90, .5);
    background: linear-gradient(135deg, rgba(255, 255, 255, .55), rgba(255, 255, 255, .2));
}
.ie {
    width: 50px;
    margin-left: 14px;
}
.explorer {
    width: 58px;
    margin-left: 2px;
}
.wmp {
    margin: 7px 20px 0 18px;
}
.chrome {
    width: 58px;
    background: linear-gradient(135deg, #e8f3fa, #a9d4ec);
}
.word {
    width: 50px;
    margin-left: 4px;
}
.excel {
    width: 58px;
    margin-left: 2px;
}
.stack {
    width: 3px;
    height: 38px;
    margin-left: 0.5px;
    border-right: 1px solid #cfe9f7;
    border-radius: 0 3px 3px 0;
}
.tray {
    margin-left: auto;
    display: flex;
    align-items: center;
    color: #fff;
    font: 12px "Open Sans", sans-serif;
    letter-spacing: -0.25px;
}
.lang {
    width: 30px;
    margin-top: -3px;
}
.flag { margin-left: 13px; }
.net { margin-left: 9px; }
.vol { margin-left: 8px; }
.clock {
    width: 82px;
    text-align: center;
    line-height: 17px;
}
.show-desktop {
    width: 14px;
    height: 38px;
    border: 1px solid #8fa9c4;
    background: linear-gradient(#50749b, #0f3057 50%, #1c4c80);
}
```
